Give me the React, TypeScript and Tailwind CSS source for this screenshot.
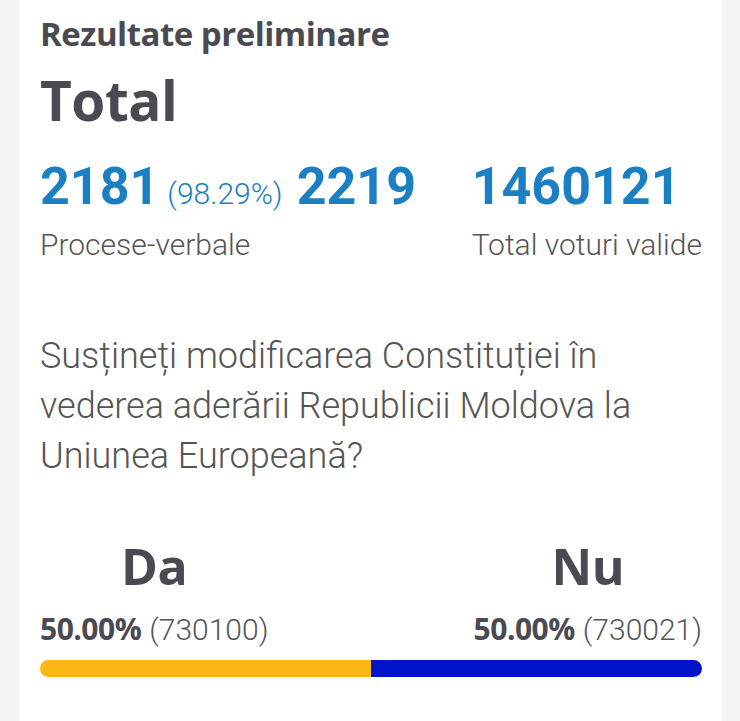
export default function App() {
  const head = { fontFamily: "'Open Sans', 'Noto Sans', sans-serif" };
  const body = { fontFamily: "Roboto, 'Liberation Sans', sans-serif" };

  return (
    <div className="min-h-screen bg-[#f3f3f3] pl-[19px] pr-[18px]">
      <div className="bg-white pl-[21px] pr-[20px] pt-[14px] pb-[44px] min-h-[721px]">
        {/* Header */}
        <h2 className="text-[33px] leading-[40px] font-bold tracking-[-0.5px] text-[#4a4a53]" style={head}>
          Rezultate preliminare
        </h2>
        <h1 className="mt-[16px] text-[55px] leading-[60px] font-bold tracking-[-0.5px] text-[#4a4a53]" style={head}>
          Total
        </h1>

        {/* Stats */}
        <div className="mt-[27px] flex justify-between" style={body}>
          <div>
            <div className="flex items-baseline text-[#1b80c3]">
              <span className="text-[52px] leading-[60px] font-bold">2181</span>
              <span className="ml-[8px] text-[30px] font-light">(98.29%)</span>
              <span className="ml-[14px] text-[52px] leading-[60px] font-bold">2219</span>
            </div>
            <div className="mt-[10px] text-[30px] leading-[36px] font-light text-[#555]">Procese-verbale</div>
          </div>
          <div>
            <div className="text-[52px] leading-[60px] font-bold text-[#1b80c3]">1460121</div>
            <div className="mt-[10px] text-[30px] leading-[36px] font-light text-[#555]">Total voturi valide</div>
          </div>
        </div>

        {/* Question */}
        <p className="mt-[68px] text-[36px] leading-[50px] font-light text-[#555]" style={body}>
          Susțineți modificarea Constituției în
          <br />
          vederea aderării Republicii Moldova la
          <br />
          Uniunea Europeană?
        </p>

        {/* Results */}
        <div className="mt-[57px] flex justify-between">
          <div className="flex flex-col items-center">
            <div className="text-[50px] leading-[56px] font-bold tracking-[-0.5px] text-[#4a4a53]" style={head}>Da</div>
            <div className="mt-[12px] flex items-baseline">
              <span className="text-[30px] font-bold tracking-[-0.5px] text-[#4a4a53]" style={head}>50.00%</span>
              <span className="ml-[8px] text-[30px] font-light text-[#555]" style={body}>(730100)</span>
            </div>
          </div>
          <div className="flex flex-col items-center">
            <div className="text-[50px] leading-[56px] font-bold tracking-[-0.5px] text-[#4a4a53]" style={head}>Nu</div>
            <div className="mt-[12px] flex items-baseline">
              <span className="text-[30px] font-bold tracking-[-0.5px] text-[#4a4a53]" style={head}>50.00%</span>
              <span className="ml-[8px] text-[30px] font-light text-[#555]" style={body}>(730021)</span>
            </div>
          </div>
        </div>

        <div className="mt-[8px] flex h-[17px] rounded-full overflow-hidden">
          <div className="bg-[#fdb713]" style={{ width: "50.003%" }} />
          <div className="flex-1 bg-[#0013c9]" />
        </div>
      </div>
    </div>
  );
}
